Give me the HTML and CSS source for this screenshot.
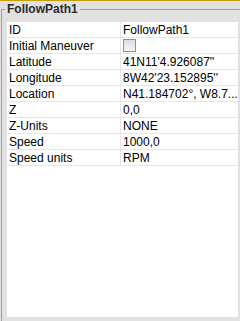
FILE: index.html
```html
<!DOCTYPE html>
<html lang="en">
<head>
    <meta charset="UTF-8">
    <title>FollowPath1</title>
    <link rel="stylesheet" href="styles.css">
</head>
<body>
    <div class="top-bar"></div>

    <fieldset class="group">
        <legend>FollowPath1</legend>
        <div class="sheet">
            <div class="row">
                <div class="key">ID</div>
                <div class="val">FollowPath1</div>
            </div>
            <div class="row">
                <div class="key">Initial Maneuver</div>
                <div class="val"><span class="check"></span></div>
            </div>
            <div class="row">
                <div class="key">Latitude</div>
                <div class="val">41N11'4.926087''</div>
            </div>
            <div class="row">
                <div class="key">Longitude</div>
                <div class="val">8W42'23.152895''</div>
            </div>
            <div class="row">
                <div class="key">Location</div>
                <div class="val">N41.184702°, W8.7...</div>
            </div>
            <div class="row">
                <div class="key">Z</div>
                <div class="val">0,0</div>
            </div>
            <div class="row">
                <div class="key">Z-Units</div>
                <div class="val">NONE</div>
            </div>
            <div class="row">
                <div class="key">Speed</div>
                <div class="val">1000,0</div>
            </div>
            <div class="row">
                <div class="key">Speed units</div>
                <div class="val">RPM</div>
            </div>
        </div>
    </fieldset>
</body>
</html>
```

FILE: styles.css
```css
/* Reset básico */
* {
    margin: 0;
    padding: 0;
    box-sizing: border-box;
}

body {
    font-family: "Liberation Sans", Arial, sans-serif;
    font-size: 12px;
    color: #000;
    background-color: #e1e1e1;
    overflow: hidden;
}

/* Faixa dourada no topo */
.top-bar {
    height: 1px;
    background-color: #c99c00;
}

/* Grupo com legenda */
.group {
    margin-left: 1px;
    width: 239px;
    border: none;
    border-top: 1px solid #a0a0a0;
    border-left: 1px solid #a0a0a0;
    padding: 4px 5px 5px 5px;
}

.group legend {
    font-weight: bold;
    color: #2a2a2a;
    line-height: 17px;
    padding: 0 2px;
    margin-left: -2px;
}

/* Folha de propriedades */
.sheet {
    background-color: #fff;
    height: 295px;
}

.row {
    display: flex;
    height: 16px;
    padding-top: 1px;
    border-bottom: 1px solid #e6e6e6;
    line-height: 14px;
}

.key {
    width: 114px;
    padding-left: 2px;
    margin-top: -1px;
    padding-top: 1px;
    border-right: 1px solid #e6e6e6;
    white-space: nowrap;
}

.val {
    flex: 1;
    padding-left: 2px;
    white-space: nowrap;
    overflow: hidden;
}

.check {
    display: inline-block;
    width: 13px;
    height: 13px;
    border: 1px solid #8e8f8f;
    background: linear-gradient(#dedede, #f5f5f5);
    vertical-align: top;
}
```
